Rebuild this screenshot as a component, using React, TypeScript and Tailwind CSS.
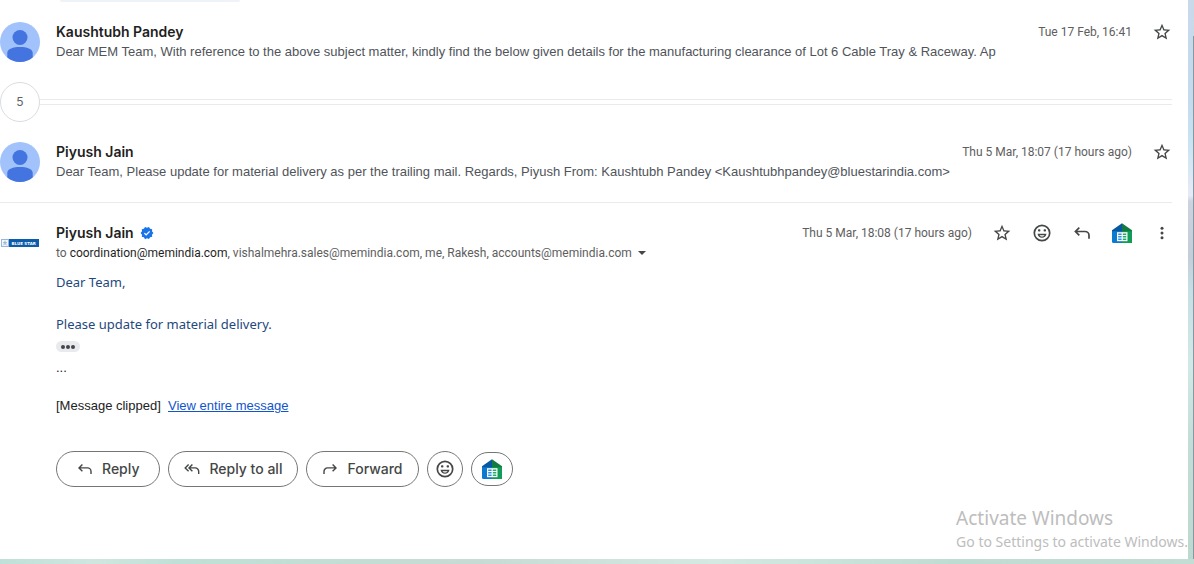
import React from "react";

function StarIcon() {
  return (
    <svg viewBox="0 0 24 24" className="size-5" fill="#444746" aria-hidden="true">
      <path d="M22 9.24l-7.19-.62L12 2 9.19 8.63 2 9.24l5.46 4.73L5.82 21 12 17.27 18.18 21l-1.63-7.03L22 9.24zM12 15.4l-3.76 2.27 1-4.28-3.32-2.88 4.38-.38L12 6.1l1.71 4.04 4.38.38-3.32 2.88 1 4.28L12 15.4z" />
    </svg>
  );
}

function SmileIcon() {
  return (
    <svg viewBox="0 0 20 20" className="size-5" fill="#444746" aria-hidden="true">
      <circle cx="10" cy="10" r="7.7" fill="none" stroke="#444746" strokeWidth="1.7" />
      <rect x="6" y="6.2" width="2.4" height="2.4" rx="0.8" />
      <rect x="11.6" y="6.2" width="2.4" height="2.4" rx="0.8" />
      <path
        fillRule="evenodd"
        d="M5.500 10.800h9c-.4 2.400-2.200 4-4.500 4s-4.100-1.600-4.500-4zM7.500 12.200c.5.800 1.400 1.300 2.500 1.300s2-.5 2.500-1.300z"
      />
    </svg>
  );
}

function ReplyIcon() {
  return (
    <svg viewBox="0 0 20 20" className="size-5" fill="none" stroke="#444746" strokeWidth="1.7" aria-hidden="true">
      <path d="M7.300 4.600L3.400 8.500l3.900 3.900M3.600 8.500h9.400a4 4 0 0 1 4 4v3.200" />
    </svg>
  );
}

function SmallReplyIcon() {
  return (
    <svg viewBox="0 0 16 16" className="size-4" fill="none" stroke="#444746" strokeWidth="1.4" aria-hidden="true">
      <path d="M5.400 3.500L2 6.900l3.400 3.400M2.200 6.900h8.300a3.500 3.500 0 0 1 3.500 3.500V13" />
    </svg>
  );
}

function ReplyAllIcon() {
  return (
    <svg viewBox="0 0 16 16" className="size-4" fill="none" stroke="#444746" strokeWidth="1.4" aria-hidden="true">
      <path d="M4.600 3.500L1.200 6.900l3.400 3.400M8.400 3.500L5 6.900l3.400 3.400M5.200 6.900h6a3.500 3.500 0 0 1 3.500 3.500V13" />
    </svg>
  );
}

function ForwardIcon() {
  return (
    <svg viewBox="0 0 16 16" className="size-4" fill="none" stroke="#444746" strokeWidth="1.4" aria-hidden="true">
      <path d="M10.600 3.500L14 6.900l-3.400 3.400M13.800 6.900H5.500A3.500 3.500 0 0 0 2 10.400V13" />
    </svg>
  );
}

function HouseIcon() {
  return (
    <svg viewBox="0 0 20 20" className="size-5" aria-hidden="true">
      <path d="M0 7.500L10 7v13H1.500A1.500 1.500 0 0 1 0 18.500z" fill="#0b7bd0" />
      <path d="M10 7l10 .5V20H10z" fill="#0f9d58" />
      <path d="M10 .3v7.900H0v-1z" fill="#0857a0" />
      <path d="M10 .3l10 6.900v1H10z" fill="#137a41" />
      <path d="M5 9.200h10.500V18.200H5z" fill="#fff" />
      <path d="M6.200 10.400h3.400v1.600H6.200zM6.200 13h3.400v1.500H6.200zM6.200 15.500h3.400V17H6.200z" fill="#2b90d8" />
      <path d="M10.800 10.400h3.500v1.600h-3.500zM10.800 13h3.500v1.500h-3.500zM10.800 15.500h3.500V17h-3.500z" fill="#28aa69" />
    </svg>
  );
}

function Avatar() {
  return (
    <svg viewBox="0 0 40 40" className="size-10 shrink-0" role="img" aria-label="Profile">
      <circle cx="20" cy="20" r="20" fill="#a1c2fa" />
      <circle cx="20" cy="15.500" r="7.500" fill="#4374e0" />
      <path d="M7.300 35.500V31c0-4.200 6-6 12.700-6s12.700 1.800 12.700 6v4.500A20 20 0 0 1 20 40 20 20 0 0 1 7.300 35.500z" fill="#4374e0" />
    </svg>
  );
}

function BlueStarLogo() {
  return (
    <div className="flex h-10 w-10 shrink-0 items-center" role="img" aria-label="Blue Star">
      <svg viewBox="0 0 40 8" className="h-2 w-10">
        <rect x="9" width="30" height="8" fill="#0d5cab" />
        <rect x="1.500" y=".5" width="7" height="7" fill="#f3f7fb" stroke="#9bb6da" />
        <path d="M5 1.700v3M3 3.700h4M3.300 6.300L5 4.500l1.700 1.800" stroke="#7ea4d0" strokeWidth=".8" fill="none" />
        <text x="11.500" y="5.500" fontSize="4" fontWeight="700" fontFamily="DejaVu Sans, sans-serif" fill="#fff">
          BLUE STAR
        </text>
      </svg>
    </div>
  );
}

function VerifiedIcon() {
  return (
    <svg viewBox="0 0 24 24" className="size-3.5" role="img" aria-label="Verified sender">
      <path
        fill="#1a73e8"
        d="M23 12l-2.440-2.790.340-3.690-3.610-.820-1.890-3.200L12 2.960 8.600 1.500 6.710 4.690 3.100 5.500l.340 3.700L1 12l2.440 2.790-.340 3.700 3.610.820L8.600 22.500l3.400-1.470 3.400 1.460 1.890-3.190 3.610-.820-.340-3.690z"
      />
      <path d="M7.500 12.200l3 3 6-6" stroke="#fff" strokeWidth="2.200" fill="none" />
    </svg>
  );
}

type RowProps = { name: string; snippet: string; date: string };

function CollapsedMessage({ name, snippet, date }: RowProps) {
  return (
    <article className="flex gap-4">
      <Avatar />
      <div className="min-w-0 flex-1">
        <div className="flex h-5 items-center">
          <h3 className="flex-1 text-sm font-semibold text-[#1f1f1f]">{name}</h3>
          <time className="font-[Roboto,sans-serif] text-xs text-[#5e5e5e]">{date}</time>
          <button type="button" aria-label="Star" className="ml-5">
            <StarIcon />
          </button>
        </div>
        <p className="truncate font-['Liberation_Sans',Arial,sans-serif] text-[13px] leading-5 text-[#50545a]">{snippet}</p>
      </div>
    </article>
  );
}

const pill =
  "flex h-9 items-center rounded-full border border-[#747775] text-sm font-medium text-[#444746]";

export default function App() {
  return (
    <div className="relative flex min-h-screen flex-col overflow-hidden bg-white font-[Inter,Roboto,sans-serif]">
      <div className="flex flex-1">
        <main className="flex min-w-0 flex-1 flex-col pr-4">
          <div className="ml-15 h-0.5 w-45 rounded-b-full bg-[#eef3f8]" />
          <div className="py-5">
            <CollapsedMessage
              name="Kaushtubh Pandey"
              date="Tue 17 Feb, 16:41"
              snippet="Dear MEM Team, With reference to the above subject matter, kindly find the below given details for the manufacturing clearance of Lot 6 Cable Tray & Raceway. Ap"
            />
          </div>
          <div className="flex items-center">
            <button type="button" className="size-10 rounded-full border border-[#dadce0] text-xs text-[#5f6368]">
              5
            </button>
            <div className="h-1.5 flex-1 border-y border-[#e8eaed]" />
          </div>
          <div className="border-b border-[#e8eaed] py-5">
            <CollapsedMessage
              name="Piyush Jain"
              date="Thu 5 Mar, 18:07 (17 hours ago)"
              snippet="Dear Team, Please update for material delivery as per the trailing mail. Regards, Piyush From: Kaushtubh Pandey <Kaushtubhpandey@bluestarindia.com>"
            />
          </div>
          <article className="flex gap-4 pt-5">
            <BlueStarLogo />
            <div className="min-w-0 flex-1">
              <header>
                <div className="flex h-5 items-center">
                  <h3 className="text-sm font-semibold text-[#1f1f1f]">Piyush Jain</h3>
                  <span className="ml-1.5 flex-1">
                    <VerifiedIcon />
                  </span>
                  <time className="font-[Roboto,sans-serif] text-xs text-[#5e5e5e]">Thu 5 Mar, 18:08 (17 hours ago)</time>
                  <div className="ml-5 flex items-center gap-5">
                    <button type="button" aria-label="Star"><StarIcon /></button>
                    <button type="button" aria-label="Add reaction"><SmileIcon /></button>
                    <button type="button" aria-label="Reply"><ReplyIcon /></button>
                    <button type="button" aria-label="Open add-on"><HouseIcon /></button>
                    <button type="button" aria-label="More">
                      <svg viewBox="0 0 20 20" className="size-5" fill="#444746" aria-hidden="true">
                        <circle cx="10" cy="5.200" r="1.500" />
                        <circle cx="10" cy="10" r="1.500" />
                        <circle cx="10" cy="14.800" r="1.500" />
                      </svg>
                    </button>
                  </div>
                </div>
                <div className="flex h-5 items-center font-[Roboto,sans-serif] text-xs text-[#5e5e5e]">
                  <p>
                    to <span className="text-[#1f1f1f]">coordination@memindia.com</span>, vishalmehra.sales@memindia.com, me, Rakesh,
                    accounts@memindia.com
                  </p>
                  <button type="button" aria-label="Show details" className="ml-1.5">
                    <svg viewBox="0 0 8 4" className="h-1 w-2" fill="#444746">
                      <path d="M0 0h8L4 4z" />
                    </svg>
                  </button>
                </div>
              </header>
              <div className="pt-2 font-['Noto_Sans',Tahoma,sans-serif] text-[13px] leading-[22px] text-[#1f497d]">
                <p>Dear Team,</p>
                <p className="pt-5">Please update for material delivery.</p>
              </div>
              <button
                type="button"
                aria-label="Show trimmed content"
                className="mt-1.5 flex h-[11px] w-6 items-center justify-center gap-px rounded-full bg-[#e8eaed]"
              >
                <span className="size-1 rounded-full bg-[#444746]" />
                <span className="size-1 rounded-full bg-[#444746]" />
                <span className="size-1 rounded-full bg-[#444746]" />
              </button>
              <div className="pt-1.5 font-['Liberation_Sans',Arial,sans-serif] text-[13px] leading-5 text-[#222222]">
                <p>...</p>
                <p className="pt-[18px]">
                  [Message clipped]&nbsp;{" "}
                  <a href="#message" className="text-[#1155cc] underline">View entire message</a>
                </p>
              </div>
              <div className="flex items-center gap-2 pt-[35px]">
                <button type="button" className={`${pill} gap-[9px] px-5`}>
                  <SmallReplyIcon />
                  Reply
                </button>
                <button type="button" className={`${pill} gap-[9px] px-[15px]`}>
                  <ReplyAllIcon />
                  Reply to all
                </button>
                <button type="button" className={`${pill} gap-[9px] px-[15px]`}>
                  <ForwardIcon />
                  Forward
                </button>
                <button type="button" aria-label="Add reaction" className={`${pill} w-9 justify-center`}>
                  <SmileIcon />
                </button>
                <button type="button" aria-label="Open add-on" className="flex h-[34px] w-[42px] items-center justify-center rounded-full border border-[#747775]">
                  <HouseIcon />
                </button>
              </div>
            </div>
          </article>
        </main>
        <div className="flex w-1.5 flex-col items-end bg-[linear-gradient(to_bottom,#c8d9ea_0%,#c5daee_18%,#c8e3f2_25%,#e6ebf6_35%,#cad3df_36%,#c4ced8_46%,#c6dfe4_52%,#d2e8e6_65%,#c2ddd5_80%,#bcd9cf_100%)]">
          <div className="mt-9 w-px flex-1 bg-[#8797a3]" />
        </div>
      </div>
      <div className="h-[5px] bg-[linear-gradient(to_right,#bfe0d8,#cfe6df_8%,#bfe0d6_15%,#c6dbd3_40%,#d3e9e2_60%,#bfdcd2_80%,#c3dcd4)]" />
      <aside className="absolute bottom-3 right-1.5 font-['Noto_Sans','Segoe_UI',sans-serif] text-[#bdbdbd]">
        <p className="text-[19px] leading-7">Activate Windows</p>
        <p className="text-sm leading-5">Go to Settings to activate Windows.</p>
      </aside>
    </div>
  );
}
